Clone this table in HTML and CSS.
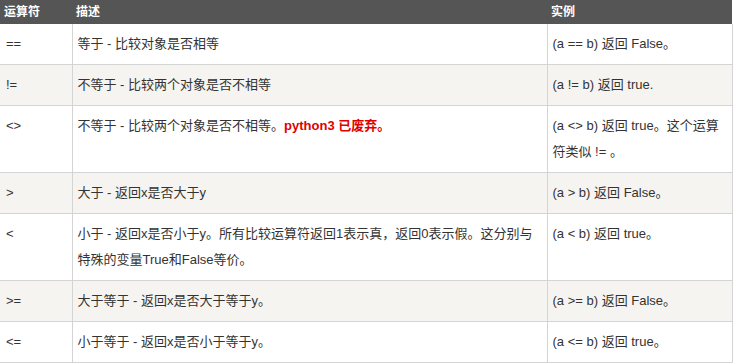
FILE: index.html
```html
<!DOCTYPE html>
<html lang="zh">
<head>
<meta charset="utf-8">
<title>比较运算符</title>
<link rel="stylesheet" href="styles.css">
</head>
<body>
<table class="ops">
  <colgroup>
    <col class="c-op">
    <col class="c-desc">
    <col class="c-ex">
  </colgroup>
  <thead>
    <tr><th>运算符</th><th>描述</th><th>实例</th></tr>
  </thead>
  <tbody>
    <tr><td>==</td><td>等于 - 比较对象是否相等</td><td>(a == b) 返回 False。</td></tr>
    <tr><td>!=</td><td>不等于 - 比较两个对象是否不相等</td><td>(a != b) 返回 true.</td></tr>
    <tr><td>&lt;&gt;</td><td>不等于 - 比较两个对象是否不相等。<span class="warn">python3 已废弃。</span></td><td>(a &lt;&gt; b) 返回 true。这个运算符类似 != 。</td></tr>
    <tr><td>&gt;</td><td>大于 - 返回x是否大于y</td><td>(a &gt; b) 返回 False。</td></tr>
    <tr><td>&lt;</td><td>小于 - 返回x是否小于y。所有比较运算符返回1表示真，返回0表示假。这分别与特殊的变量True和False等价。</td><td>(a &lt; b) 返回 true。</td></tr>
    <tr><td>&gt;=</td><td>大于等于 - 返回x是否大于等于y。</td><td>(a &gt;= b) 返回 False。</td></tr>
    <tr><td>&lt;=</td><td>小于等于 - 返回x是否小于等于y。</td><td>(a &lt;= b) 返回 true。</td></tr>
  </tbody>
</table>
</body>
</html>
```

FILE: styles.css
```css
html, body {
  margin: 0;
  padding: 0;
  background: #fff;
}
body {
  font-family: "Liberation Sans", "Noto Sans CJK SC", sans-serif;
  font-size: 13px;
  color: #333;
}
.ops {
  border-collapse: collapse;
  table-layout: fixed;
  width: 732px;
}
.c-op { width: 72px; }
.c-desc { width: 475px; }
.c-ex { width: 185px; }
.ops th {
  background: #555;
  color: #fff;
  font-size: 12px;
  font-weight: bold;
  text-align: left;
  height: 24px;
  padding: 0 4px;
  line-height: 24px;
  border: none;
}
.ops td {
  padding: 7px 5px;
  line-height: 26px;
  vertical-align: top;
  border: 1px solid #d4d4d4;
  border-top: none;
}
.ops td:first-child {
  border-left: none;
  padding-left: 6px;
}
.ops tbody tr:nth-child(even) td {
  background: #f6f4f0;
}
.warn {
  color: #e10000;
  font-weight: bold;
}
```
